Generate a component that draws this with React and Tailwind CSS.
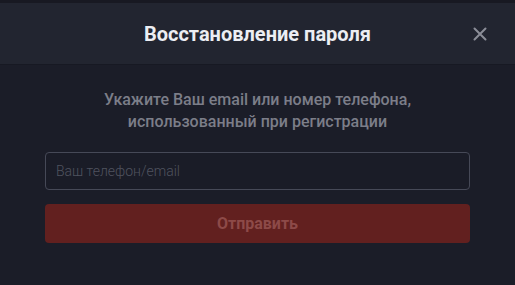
export default function App() {
  return (
    <div className="w-[515px] h-[285px] bg-[#1b1d28] flex flex-col overflow-hidden" style={{ fontFamily: 'Roboto, "Noto Sans", sans-serif' }}>
      <div className="h-[3px] bg-[#181922]" />
      <div className="h-[62px] bg-[#222530] border-b border-[#171923] relative flex items-center justify-center">
        <h2 className="text-[20px] font-bold text-[#eceef3] leading-none">Восстановление пароля</h2>
        <button className="absolute right-[28px] top-[24px] text-[#8b8d97]">
          <svg width="14" height="14" viewBox="0 0 14 14" fill="none" stroke="currentColor" strokeWidth="2" strokeLinecap="round">
            <path d="M1.5 1.5 L12.5 12.5 M12.5 1.5 L1.5 12.5" />
          </svg>
        </button>
      </div>
      <div className="flex flex-col px-[45px] pt-[24px]">
        <p className="text-center text-[16px] font-medium leading-[22px] text-[#7c7e89]">
          Укажите Ваш email или номер телефона,<br />использованный при регистрации
        </p>
        <input
          className="mt-[19px] h-[38px] w-full rounded-[4px] border border-[#464957] bg-[#1a1c27] px-[10px] text-[14px] font-light text-[#cfd1d8] placeholder:text-[#50535f] outline-none"
          placeholder="Ваш телефон/email"
        />
        <button className="mt-[14px] h-[39px] w-full rounded-[4px] bg-[#62201f] text-[16px] font-bold text-[#8d4a48]">
          Отправить
        </button>
      </div>
    </div>
  );
}
